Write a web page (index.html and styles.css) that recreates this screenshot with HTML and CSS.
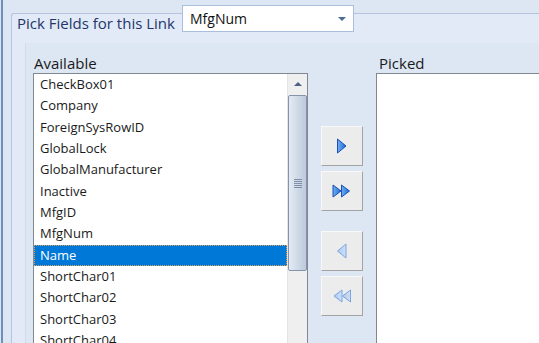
FILE: index.html
```html
<!DOCTYPE html>
<html lang="en">
<head>
    <meta charset="UTF-8">
    <title>Pick Fields</title>
    <link rel="stylesheet" href="styles.css">
</head>
<body>
    <div class="window">
        <div class="group">
            <div class="group-head">
                <span class="group-title">Pick Fields for this Link</span>
                <div class="combo">
                    <span class="combo-text">MfgNum</span>
                    <span class="combo-arrow"></span>
                </div>
            </div>
            <div class="panel">
                <div class="col">
                    <div class="cap">Available</div>
                    <div class="listbox">
                        <ul class="items">
                            <li>CheckBox01</li>
                            <li>Company</li>
                            <li>ForeignSysRowID</li>
                            <li>GlobalLock</li>
                            <li>GlobalManufacturer</li>
                            <li>Inactive</li>
                            <li>MfgID</li>
                            <li>MfgNum</li>
                            <li class="selected">Name</li>
                            <li>ShortChar01</li>
                            <li>ShortChar02</li>
                            <li>ShortChar03</li>
                            <li>ShortChar04</li>
                        </ul>
                        <div class="vscroll">
                            <div class="scroll-up"><span class="up-arrow"></span></div>
                            <div class="thumb"><span class="grip"></span></div>
                        </div>
                    </div>
                </div>

                <div class="buttons">
                    <div class="btn-pair">
                        <button class="btn">
                            <svg width="12" height="16" viewBox="0 0 12 16">
                                <defs>
                                    <linearGradient id="gOn" x1="0" y1="0" x2="1" y2="0">
                                        <stop offset="0" stop-color="#6fb0f5"/>
                                        <stop offset="1" stop-color="#1f66d6"/>
                                    </linearGradient>
                                </defs>
                                <polygon points="1.5,1 10,8 1.5,15" fill="url(#gOn)" stroke="#1b4fb2" stroke-width="1" stroke-linejoin="round"/>
                            </svg>
                        </button>
                        <button class="btn">
                            <svg width="20" height="14" viewBox="0 0 20 14">
                                <polygon points="1,1 9,7 1,13" fill="url(#gOn)" stroke="#1b4fb2" stroke-width="1" stroke-linejoin="round"/>
                                <polygon points="9.5,1 17.5,7 9.5,13" fill="url(#gOn)" stroke="#1b4fb2" stroke-width="1" stroke-linejoin="round"/>
                            </svg>
                        </button>
                    </div>
                    <div class="btn-pair">
                        <button class="btn off">
                            <svg width="12" height="16" viewBox="0 0 12 16">
                                <defs>
                                    <linearGradient id="gOff" x1="0" y1="0" x2="1" y2="0">
                                        <stop offset="0" stop-color="#a9c8f2"/>
                                        <stop offset="1" stop-color="#cfe0f8"/>
                                    </linearGradient>
                                </defs>
                                <polygon points="10,1 1.5,8 10,15" fill="url(#gOff)" stroke="#7ea4dc" stroke-width="1" stroke-linejoin="round"/>
                            </svg>
                        </button>
                        <button class="btn off">
                            <svg width="20" height="14" viewBox="0 0 20 14">
                                <polygon points="10,1 2,7 10,13" fill="url(#gOff)" stroke="#7ea4dc" stroke-width="1" stroke-linejoin="round"/>
                                <polygon points="18.5,1 10.5,7 18.5,13" fill="url(#gOff)" stroke="#7ea4dc" stroke-width="1" stroke-linejoin="round"/>
                            </svg>
                        </button>
                    </div>
                </div>

                <div class="col">
                    <div class="cap picked-cap">Picked</div>
                    <div class="listbox picked"></div>
                </div>
            </div>
        </div>
    </div>
</body>
</html>
```

FILE: styles.css
```css
html, body {
    margin: 0;
    padding: 0;
    height: 343px;
    overflow: hidden;
}
body {
    background-color: #dde7f3;
    font-family: 'Open Sans', 'Noto Sans', sans-serif;
    font-size: 13px;
    color: #1a1a1a;
}
.window {
    margin-left: 1px;
    border-left: 2px solid #6f8dbd;
    padding-left: 8px;
    padding-top: 13px;
    height: 330px;
}
.group {
    border-top: 1px solid #b3c4dc;
    border-left: 1px solid #b3c4dc;
    border-top-left-radius: 3px;
    background-color: #e1eaf6;
    height: 330px;
}
.group-head {
    display: flex;
    align-items: flex-start;
    height: 27px;
    margin-top: -9px;
    padding-left: 5px;
}
.group-title {
    width: 165px;
    padding-top: 10px;
    line-height: 17px;
    font-size: 15px;
    color: #23366a;
    white-space: nowrap;
}
.combo {
    display: flex;
    align-items: center;
    width: 170px;
    height: 25px;
    border: 1px solid #a9bfdd;
    background-color: #ffffff;
}
.combo-text {
    flex: 1;
    padding-left: 7px;
    font-size: 14px;
    color: #111;
}
.combo-arrow {
    width: 0;
    height: 0;
    margin-right: 7px;
    border-left: 4px solid transparent;
    border-right: 4px solid transparent;
    border-top: 4px solid #4b6b98;
}
.panel {
    display: grid;
    grid-template-columns: 275px 68px 1fr;
    margin-top: 11px;
    margin-left: 13px;
    padding-left: 7px;
    padding-top: 11px;
    border-left: 1px solid #cfdbeb;
    background-color: #dde7f3;
    height: 300px;
}
.cap {
    height: 19px;
    line-height: 19px;
    padding-left: 1px;
    font-size: 15px;
    color: #1a1a1a;
}
.picked-cap {
    padding-left: 3px;
}
.listbox {
    display: flex;
    border: 1px solid #828790;
    background-color: #ffffff;
    height: 280px;
}
.items {
    flex: 1;
    list-style: none;
    margin: 0;
    padding: 0;
}
.items li {
    height: 21.33px;
    line-height: 21px;
    padding-left: 6px;
    white-space: nowrap;
    box-sizing: border-box;
}
.items li.selected {
    background-color: #0078d7;
    color: #ffffff;
    outline: 1px dotted #e0a060;
    outline-offset: -1px;
}
.vscroll {
    width: 19px;
    background-color: #efefef;
    border-left: 1px solid #e4e4e4;
}
.scroll-up {
    height: 20px;
    display: flex;
    justify-content: center;
    align-items: center;
}
.up-arrow {
    width: 0;
    height: 0;
    border-left: 4px solid transparent;
    border-right: 4px solid transparent;
    border-bottom: 4px solid #4d5f82;
}
.thumb {
    margin: 1px 0 0 0;
    height: 174px;
    border: 1px solid #8594ae;
    border-radius: 2px;
    background: linear-gradient(to right, #e4ebf3, #d0dae7 50%, #bccadc);
    display: flex;
    justify-content: center;
    align-items: center;
}
.grip {
    width: 8px;
    height: 9px;
    background: repeating-linear-gradient(to bottom, #7f8ea8 0, #7f8ea8 1px, transparent 1px, transparent 2px);
}
.buttons {
    display: flex;
    flex-direction: column;
    gap: 20px;
    padding-top: 72px;
    padding-left: 13px;
}
.btn-pair {
    display: flex;
    flex-direction: column;
    gap: 5px;
}
.btn {
    width: 42px;
    height: 40px;
    padding: 0;
    border: 1px solid;
    border-color: #f8f8f8 #a3a3a3 #a3a3a3 #f8f8f8;
    background-color: #ececec;
    display: flex;
    justify-content: center;
    align-items: center;
}
.picked {
    border-right: none;
}
```
